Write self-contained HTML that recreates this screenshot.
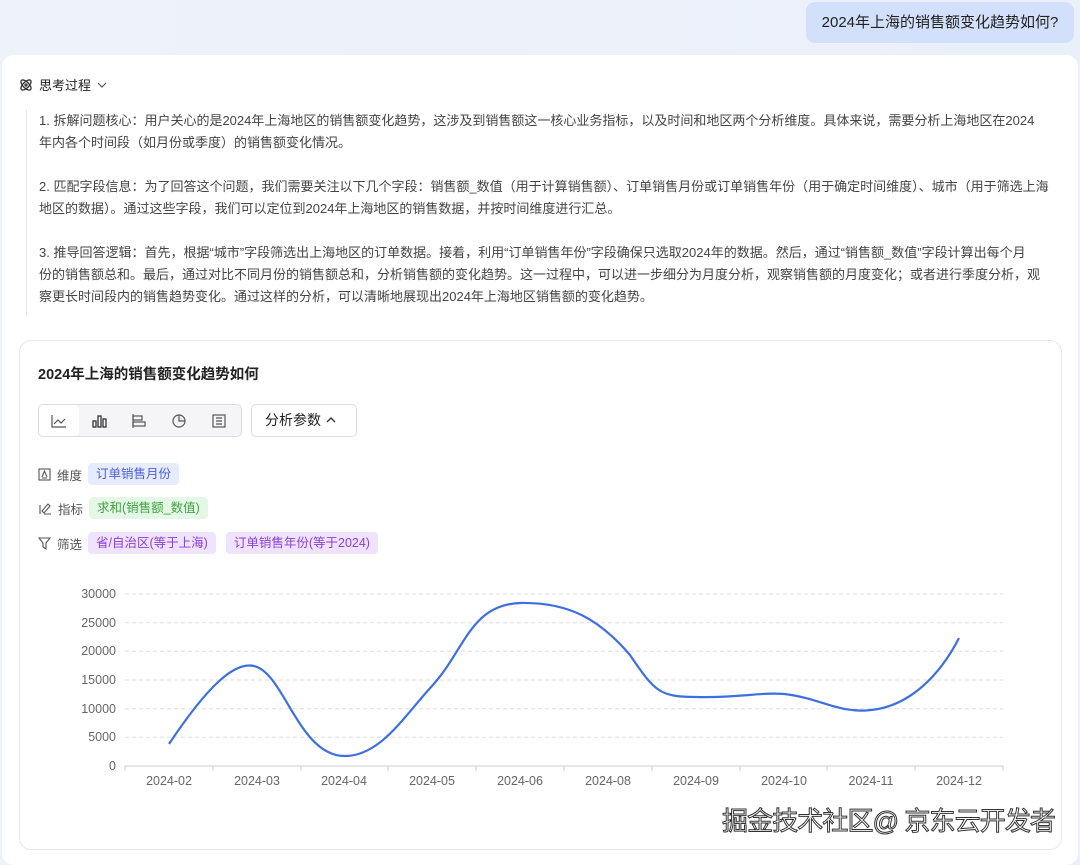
<!DOCTYPE html>
<html><head><meta charset="utf-8">
<style>
*{margin:0;padding:0;box-sizing:border-box}
body{width:1080px;height:855px;overflow:hidden;background:linear-gradient(90deg,#eef2f9,#eaf0fa);font-family:"Liberation Sans","Noto Sans CJK SC",sans-serif;color:#333;position:relative}
.q{position:absolute;left:806px;top:2px;width:268px;height:41px;background:#d3e0fb;border-radius:9px;font-size:15px;color:#222;line-height:41px;text-align:center}
.card{position:absolute;left:2px;top:55px;width:1076px;height:810px;background:#fff;border-radius:12px}
.th{position:absolute;left:18px;top:75px;font-size:13px;color:#222;display:flex;align-items:center;gap:5px}
.think{position:absolute;left:26px;top:110px;width:1030px;height:206px;border-left:1px solid #e6e6e6;padding-left:12px;font-size:13px;line-height:22px;color:#444;white-space:nowrap}
.think p{margin-bottom:22px}
.inner{position:absolute;left:19px;top:340px;width:1043px;height:510px;border:1px solid #e8e8ec;border-radius:12px}
.title{position:absolute;left:38px;top:363px;font-size:14.5px;font-weight:bold;color:#222}
.tb{position:absolute;left:38px;top:404px;width:204px;height:33px;border:1px solid #ddd;border-radius:5px;background:#f5f5f7;display:flex}
.tb div{width:40px;height:31px;display:flex;align-items:center;justify-content:center}
.tb div:first-child{background:#fff;border-radius:4px}
.ap{position:absolute;left:251px;top:404px;width:106px;height:33px;border:1px solid #ddd;border-radius:5px;font-size:14px;line-height:31px;padding-left:13px;color:#222}
.row{position:absolute;left:38px;font-size:12.5px;color:#555;display:flex;align-items:center;gap:6px;height:22px}
.tag{display:inline-block;padding:0 8px;height:22px;line-height:22px;border-radius:4px;font-size:12.5px;margin-right:4px}
.b{background:#e6ebfd;color:#4b5fd6}.g{background:#e5f7e6;color:#3fa33f}.p{background:#efe3fd;color:#8a3fd6}
.wm{position:absolute;left:722px;top:801px;font-size:26px;color:#fff;-webkit-text-stroke:1px #333;letter-spacing:-0.9px}
</style></head><body>
<div class="q">2024年上海的销售额变化趋势如何?</div>
<div class="card"></div>
<div class="th"><svg width="16" height="16" viewBox="0 0 16 16" fill="none" stroke="#333" stroke-width="1.3"><ellipse cx="8" cy="8" rx="6.5" ry="3" transform="rotate(45 8 8)"/><ellipse cx="8" cy="8" rx="6.5" ry="3" transform="rotate(-45 8 8)"/><circle cx="8" cy="8" r="1"/></svg>思考过程 <svg width="12" height="10" viewBox="0 0 12 10"><path d="M2 3l4 4 4-4" stroke="#555" fill="none" stroke-width="1.2"/></svg></div>
<div class="think">
<p>1. 拆解问题核心：用户关心的是2024年上海地区的销售额变化趋势，这涉及到销售额这一核心业务指标，以及时间和地区两个分析维度。具体来说，需要分析上海地区在2024<br>年内各个时间段（如月份或季度）的销售额变化情况。</p>
<p>2. 匹配字段信息：为了回答这个问题，我们需要关注以下几个字段：销售额_数值（用于计算销售额）、订单销售月份或订单销售年份（用于确定时间维度）、城市（用于筛选上海<br>地区的数据）。通过这些字段，我们可以定位到2024年上海地区的销售数据，并按时间维度进行汇总。</p>
<p>3. 推导回答逻辑：首先，根据“城市”字段筛选出上海地区的订单数据。接着，利用“订单销售年份”字段确保只选取2024年的数据。然后，通过“销售额_数值”字段计算出每个月<br>份的销售额总和。最后，通过对比不同月份的销售额总和，分析销售额的变化趋势。这一过程中，可以进一步细分为月度分析，观察销售额的月度变化；或者进行季度分析，观<br>察更长时间段内的销售趋势变化。通过这样的分析，可以清晰地展现出2024年上海地区销售额的变化趋势。</p>
</div>
<div class="inner"></div>
<div class="title">2024年上海的销售额变化趋势如何</div>
<div class="tb">
<div><svg width="16" height="14" fill="none" stroke="#555" stroke-width="1.2"><path d="M1 1v12h14"/><path d="M3 10l4-4 3 3 4-4"/></svg></div>
<div><svg width="16" height="14" fill="none" stroke="#333" stroke-width="1.3"><rect x="2" y="7" width="3" height="6"/><rect x="7" y="2" width="3" height="11"/><rect x="12" y="5" width="3" height="8"/></svg></div>
<div><svg width="16" height="14" fill="none" stroke="#555" stroke-width="1.2"><path d="M2 0v14"/><rect x="2" y="2" width="9" height="4"/><rect x="2" y="8" width="12" height="4"/></svg></div>
<div><svg width="16" height="16" fill="none" stroke="#555" stroke-width="1.2"><circle cx="8" cy="8" r="6"/><path d="M8 2v6h6"/></svg></div>
<div><svg width="16" height="16" fill="none" stroke="#555" stroke-width="1.2"><rect x="2" y="2" width="12" height="12"/><path d="M5 5h6M5 8h6M5 11h6"/></svg></div>
</div>
<div class="ap">分析参数 <svg width="12" height="10" viewBox="0 0 12 10"><path d="M2 7l4-4 4 4" stroke="#333" fill="none" stroke-width="1.4"/></svg></div>
<div class="row" style="top:463px"><svg width="13" height="13" fill="none" stroke="#555" stroke-width="1.1"><rect x="1" y="1" width="11" height="11"/><path d="M4 9l2.5-6 2.5 6M4 10h5"/></svg>维度 <span class="tag b">订单销售月份</span></div>
<div class="row" style="top:497px"><svg width="14" height="13" fill="none" stroke="#555" stroke-width="1.1"><path d="M2 3v9M6 12h7M6 11l6-7-2-2-6 7z"/></svg>指标 <span class="tag g">求和(销售额_数值)</span></div>
<div class="row" style="top:532px"><svg width="13" height="13" fill="none" stroke="#555" stroke-width="1.1"><path d="M1 1h11l-4 5v6l-3-2V6z"/></svg>筛选 <span class="tag p">省/自治区(等于上海)</span><span class="tag p">订单销售年份(等于2024)</span></div>
<svg style="position:absolute;left:0;top:580px" width="1080" height="210" font-family="Liberation Sans,sans-serif" font-size="12.5" fill="#666">
<g stroke="#ddd" stroke-dasharray="4 3"><path d="M125 14H1003M125 42.7H1003M125 71.3H1003M125 100H1003M125 128.7H1003M125 157.3H1003"/></g>
<path d="M125 186H1003" stroke="#ccc"/>
<g stroke="#ccc"><path d="M125 186v5M213 186v5M301 186v5M388 186v5M476 186v5M564 186v5M652 186v5M740 186v5M827 186v5M915 186v5M1003 186v5"/></g>
<g text-anchor="end"><text x="116" y="18">30000</text><text x="116" y="47">25000</text><text x="116" y="75">20000</text><text x="116" y="104">15000</text><text x="116" y="133">10000</text><text x="116" y="161">5000</text><text x="116" y="190">0</text></g>
<g text-anchor="middle"><text x="169" y="205">2024-02</text><text x="257" y="205">2024-03</text><text x="344" y="205">2024-04</text><text x="432" y="205">2024-05</text><text x="520" y="205">2024-06</text><text x="608" y="205">2024-08</text><text x="696" y="205">2024-09</text><text x="784" y="205">2024-10</text><text x="871" y="205">2024-11</text><text x="959" y="205">2024-12</text></g>
<path d="M169 164C205 110 235 78 257 87C285 98 300 175 344 176C380 177 405 135 432 106C465 70 470 25 520 23C570 22 600 40 630 75C655 112 660 117 696 117C740 118 760 112 784 114C820 118 840 134 871 130C910 126 940 95 959 58" fill="none" stroke="#3d6fe0" stroke-width="2.2"/>
</svg>
<div class="wm">掘金技术社区@ 京东云开发者</div>
</body></html>
